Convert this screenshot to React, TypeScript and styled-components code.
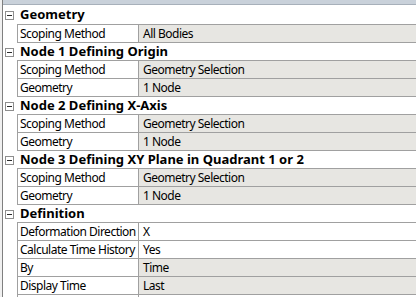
import React from 'react';
import styled, { createGlobalStyle } from 'styled-components';

const GlobalStyle = createGlobalStyle`
  html, body {
    margin: 0;
    padding: 0;
    background: #f0f0f0;
    overflow: hidden;
  }
  body {
    font-family: "Segoe UI", "Noto Sans", sans-serif;
    font-size: 12px;
    color: #000;
  }
`;

type Row =
  | { kind: 'group'; title: string }
  | { kind: 'prop'; name: string; value: string; editable?: boolean };

const rows: Row[] = [
  { kind: 'group', title: 'Geometry' },
  { kind: 'prop', name: 'Scoping Method', value: 'All Bodies' },
  { kind: 'group', title: 'Node 1 Defining Origin' },
  { kind: 'prop', name: 'Scoping Method', value: 'Geometry Selection' },
  { kind: 'prop', name: 'Geometry', value: '1 Node' },
  { kind: 'group', title: 'Node 2 Defining X-Axis' },
  { kind: 'prop', name: 'Scoping Method', value: 'Geometry Selection' },
  { kind: 'prop', name: 'Geometry', value: '1 Node' },
  { kind: 'group', title: 'Node 3 Defining XY Plane in Quadrant 1 or 2' },
  { kind: 'prop', name: 'Scoping Method', value: 'Geometry Selection' },
  { kind: 'prop', name: 'Geometry', value: '1 Node' },
  { kind: 'group', title: 'Definition' },
  { kind: 'prop', name: 'Deformation Direction', value: 'X', editable: true },
  { kind: 'prop', name: 'Calculate Time History', value: 'Yes', editable: true },
  { kind: 'prop', name: 'By', value: 'Time' },
  { kind: 'prop', name: 'Display Time', value: 'Last' },
  { kind: 'prop', name: '', value: '', editable: true },
];

const Frame = styled.div`
  margin-left: 2px;
  border-left: 1px solid #7f7f7f;
  background: #fff;
  height: 297px;
  overflow: hidden;
`;

const TopBar = styled.div`
  height: 4px;
  background: #c9d1da;
  border-bottom: 1px solid #a7b0ba;
`;

const Grid = styled.div`
  display: grid;
  grid-template-columns: 14px 121px 1fr;
`;

const Tree = styled.div`
  display: flex;
  align-items: center;
  justify-content: flex-start;
  padding-left: 2px;
  background: #fff;
`;

const Toggle = styled.span`
  box-sizing: border-box;
  width: 9px;
  height: 9px;
  border: 1px solid #8e8e8e;
  background: #fff;
  display: flex;
  align-items: center;
  justify-content: center;

  &::before {
    content: '';
    width: 5px;
    height: 1px;
    background: #2b2b2b;
  }
`;

const GroupTitle = styled.div<{ $first?: boolean }>`
  grid-column: 2 / 4;
  height: ${(p) => (p.$first ? '19px' : '17px')};
  line-height: ${(p) => (p.$first ? '18px' : '17px')};
  padding-left: 3px;
  font-size: 13px;
  font-weight: 700;
  border-bottom: 1px solid #a0a0a0;
  white-space: nowrap;
`;

const NameCell = styled.div`
  height: 17px;
  line-height: 17px;
  padding-left: 2px;
  letter-spacing: -0.5px;
  border-left: 1px solid #a0a0a0;
  border-bottom: 1px solid #a0a0a0;
  white-space: nowrap;
  overflow: hidden;
`;

const ValueCell = styled.div<{ $editable?: boolean }>`
  height: 17px;
  line-height: 17px;
  padding-left: 4px;
  letter-spacing: -0.5px;
  border-left: 1px solid #a0a0a0;
  border-bottom: 1px solid #a0a0a0;
  background: ${(p) => (p.$editable ? '#fff' : '#e7e6e2')};
  white-space: nowrap;
  overflow: hidden;
`;

export default function App() {
  return (
    <>
      <GlobalStyle />
      <Frame>
        <TopBar />
        <Grid>
          {rows.map((r, i) =>
            r.kind === 'group' ? (
              <React.Fragment key={i}>
                <Tree>
                  <Toggle />
                </Tree>
                <GroupTitle $first={i === 0}>{r.title}</GroupTitle>
              </React.Fragment>
            ) : (
              <React.Fragment key={i}>
                <Tree />
                <NameCell>{r.name}</NameCell>
                <ValueCell $editable={r.editable}>{r.value}</ValueCell>
              </React.Fragment>
            )
          )}
        </Grid>
      </Frame>
    </>
  );
}
